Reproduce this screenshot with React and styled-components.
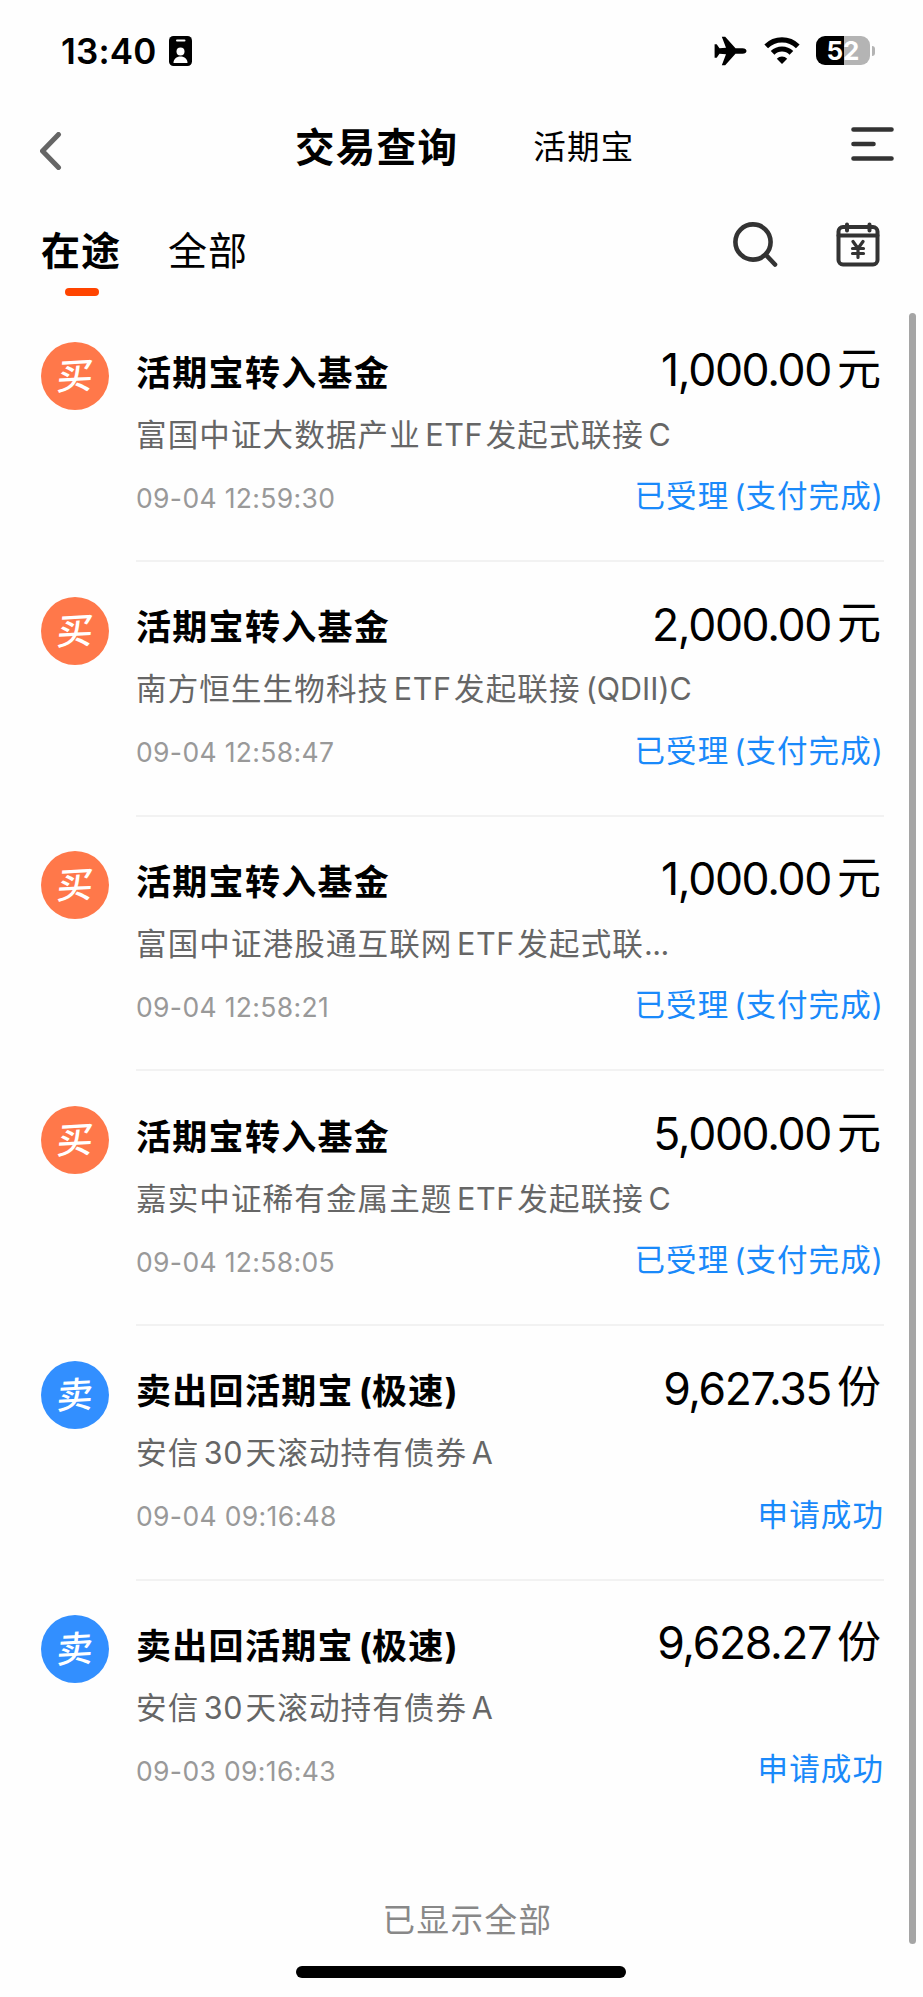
import React from 'react'
import styled, { createGlobalStyle } from 'styled-components'

const GlobalStyle = createGlobalStyle`
  * {
    box-sizing: border-box;
  }
  body {
    margin: 0;
    background: #fefefe;
    font-family: Inter, "Noto Sans CJK SC", sans-serif;
    color: #000;
  }
`
const Page = styled.div`
  width: 923px;
  height: 1997px;
  display: flex;
  flex-direction: column;
  overflow: hidden;
  white-space: nowrap;
`
const StatusBar = styled.div`
  height: 101px;
  padding: 0 48px 0 61px;
  display: flex;
  align-items: center;
  flex: none;
`
const Clock = styled.span`
  font-size: 35px;
  font-weight: 600;
  letter-spacing: 0.2px;
  margin-right: 12px;
`
const StatusIcons = styled.div`
  margin-left: auto;
  display: flex;
  align-items: center;
`
const Battery = styled.div`
  width: 54px;
  height: 29px;
  margin-left: 16px;
  border-radius: 9px;
  background: linear-gradient(90deg, #000 52%, #b4b4b4 52%);
  color: #fff;
  font-size: 26px;
  font-weight: 700;
  line-height: 29px;
  text-align: center;
`
const BatteryTip = styled.div`
  width: 3px;
  height: 10px;
  margin-left: 2px;
  border-radius: 0 4px 4px 0;
  background: #b4b4b4;
`
const NavBar = styled.div`
  height: 90px;
  margin-top: 1px;
  padding: 0 29px 0 40px;
  display: flex;
  align-items: center;
  flex: none;
`
const BackButton = styled.div`
  display: flex;
  padding-top: 7px;
`
const NavTitle = styled.h1`
  margin: 0 0 0 233px;
  padding-top: 2px;
  font-size: 39.5px;
  font-weight: 700;
  letter-spacing: 1.3px;
  line-height: 60px;
`
const NavLink = styled.span`
  margin-left: 75px;
  padding-top: 2px;
  font-size: 32.5px;
  letter-spacing: 1.3px;
  line-height: 60px;
`
const MenuButton = styled.div`
  margin-left: auto;
  padding-bottom: 6px;
  display: flex;
`
const TabBar = styled.div`
  height: 120px;
  padding: 24px 43px 0 41px;
  display: flex;
  align-items: flex-start;
  flex: none;
`
const Tab = styled.div`
  margin-right: 47px;
  display: flex;
  flex-direction: column;
  align-items: center;
  font-size: 39px;
  font-weight: ${p => (p.$active ? 700 : 400)};
  letter-spacing: 1px;
  line-height: 70px;
  &::after {
    content: '';
    width: 34px;
    height: 8px;
    border-radius: 4px;
    margin: 2px 0 0 2px;
    background: ${p => (p.$active ? '#ff4400' : 'transparent')};
  }
`
const Tools = styled.div`
  margin: 6px 0 0 auto;
  display: flex;
  gap: 58px;
`
const Body = styled.div`
  height: 1631px;
  display: flex;
  flex: none;
  margin-top: 1px;
`
const Content = styled.div`
  flex: 1;
  padding-left: 41px;
`
const Row = styled.div`
  height: 254.7px;
  display: flex;
  align-items: flex-start;
`
const Badge = styled.div`
  width: 68px;
  height: 68px;
  margin: 29px 27px 0 0;
  border-radius: 50%;
  flex: none;
  display: flex;
  align-items: center;
  justify-content: center;
  background: ${p => (p.$sell ? '#328fff' : '#ff784a')};
  color: #fff;
  font-size: 36px;
  font-weight: 500;
`
const BadgeText = styled.span`
  line-height: 40px;
  transform: rotate(-3deg) skewX(-8deg);
`
const Detail = styled.div`
  width: 748px;
  height: 249px;
  border-bottom: ${p => (p.$last ? 'none' : '2px solid #f2f2f2')};
`
const Line = styled.div`
  display: flex;
  justify-content: space-between;
  align-items: center;
  height: ${p => p.$height}px;
`
const Title = styled.div`
  font-size: 35px;
  font-weight: 700;
  letter-spacing: 1.3px;
`
const Amount = styled.div`
  display: flex;
  align-items: center;
  font-size: 44.5px;
  letter-spacing: -1.35px;
  margin-right: 3px;
`
const Unit = styled.span`
  font-size: 44px;
  margin-left: 6px;
  padding-bottom: 9px;
  letter-spacing: 0;
`
const Fund = styled.div`
  font-size: 30.5px;
  letter-spacing: 1.15px;
  color: #666;
`
const Latin = styled.span`
  margin-left: ${p => (p.$open ? 5 : 4.5)}px;
  margin-right: ${p => (p.$open ? 0 : 2.5)}px;
  letter-spacing: ${p => (p.$open ? 0 : 0.6)}px;
`
const Dots = styled.span`
  letter-spacing: -0.5px;
`
const Time = styled.div`
  padding-top: 7px;
  font-size: 26.5px;
  letter-spacing: 0.35px;
  color: #999;
`
const Status = styled.div`
  font-size: 30.5px;
  letter-spacing: 1.1px;
  color: #1989fa;
`
const Scrollbar = styled.div`
  width: 7px;
  height: 1631px;
  margin-right: 7px;
  border-radius: 4px;
  background: #a5a5a5;
`
const Footer = styled.div`
  margin-top: 55px;
  padding-right: 15px;
  text-align: center;
  font-size: 32.5px;
  letter-spacing: 1.5px;
  line-height: 50px;
  color: #888;
`
const HomeIndicator = styled.div`
  width: 330px;
  height: 12px;
  flex: none;
  margin: 22px auto 0 296px;
  border-radius: 6px;
  background: #000;
`

const orders = [
  { title: '活期宝转入基金', amount: '1,000.00', unit: '元', fund: '富国中证大数据产业ETF发起式联接C', time: '09-04 12:59:30', status: '已受理(支付完成)' },
  { title: '活期宝转入基金', amount: '2,000.00', unit: '元', fund: '南方恒生生物科技ETF发起联接(QDII)C', time: '09-04 12:58:47', status: '已受理(支付完成)' },
  { title: '活期宝转入基金', amount: '1,000.00', unit: '元', fund: '富国中证港股通互联网ETF发起式联...', time: '09-04 12:58:21', status: '已受理(支付完成)' },
  { title: '活期宝转入基金', amount: '5,000.00', unit: '元', fund: '嘉实中证稀有金属主题ETF发起联接C', time: '09-04 12:58:05', status: '已受理(支付完成)' },
  { sell: true, title: '卖出回活期宝(极速)', amount: '9,627.35', unit: '份', fund: '安信30天滚动持有债券A', time: '09-04 09:16:48', status: '申请成功' },
  { sell: true, title: '卖出回活期宝(极速)', amount: '9,628.27', unit: '份', fund: '安信30天滚动持有债券A', time: '09-03 09:16:43', status: '申请成功' }
]

// adds the narrow gap between Chinese and Latin runs
const Mixed = ({ text }) =>
  text.split(/([A-Z0-9]+|\([A-Z]+\)C|\(|\.{3})/).map((part, i) => {
    if (i % 2 === 0) return part
    if (part === '...') return <Dots key={i}>{part}</Dots>
    return <Latin key={i} $open={part[0] === '('}>{part}</Latin>
  })

const Order = ({ order, last }) => (
  <Row>
    <Badge $sell={order.sell}><BadgeText>{order.sell ? '卖' : '买'}</BadgeText></Badge>
    <Detail $last={last}>
      <Line $height={114}>
        <Title><Mixed text={order.title} /></Title>
        <Amount>{order.amount}<Unit>{order.unit}</Unit></Amount>
      </Line>
      <Line $height={11}>
        <Fund><Mixed text={order.fund} /></Fund>
      </Line>
      <Line $height={112}>
        <Time>{order.time}</Time>
        <Status><Mixed text={order.status} /></Status>
      </Line>
    </Detail>
  </Row>
)

const IdCard = () => (
  <svg width='23' height='30' viewBox='0 0 23 30'>
    <rect width='23' height='30' rx='4.5' />
    <rect x='7' y='3.5' width='9.5' height='2' rx='1' fill='#fff' />
    <circle cx='11.5' cy='15.5' r='4' fill='#fff' />
    <path d='M4.5 27c0-4 3-6.500 7-6.500s7 2.500 7 6.500z' fill='#fff' />
  </svg>
)

const Plane = () => (
  <svg width='33' height='30' viewBox='0 0 33 30'>
    <path d='M32.500 15c0 1.500-1.500 2.700-4 2.700h-7L11.200 29.300H7.800l4.200-11.100-6.500-.5-2.800 4H.6V8.300h2.100l2.800 4 6.500-.5L7.800.7h3.400L21.500 12.300h7c2.500 0 4 1.200 4 2.700z' />
  </svg>
)

const Wifi = () => (
  <svg width='36' height='27' viewBox='0 0 36 27' fill='none' stroke='#000' strokeWidth='5.200'>
    <path d='M2.200 9.300a22.500 22.500 0 0 1 31.600 0' />
    <path d='M8.600 15.900a13.300 13.300 0 0 1 18.800 0' />
    <path d='M18 27l-5.200-5.300a7.400 7.400 0 0 1 10.400 0z' fill='#000' stroke='none' />
  </svg>
)

const App = () => (
  <Page>
    <GlobalStyle />
    <StatusBar>
      <Clock>13:40</Clock>
      <IdCard />
      <StatusIcons>
        <Plane />
        <svg width='17' height='1' />
        <Wifi />
        <Battery>52</Battery>
        <BatteryTip />
      </StatusIcons>
    </StatusBar>
    <NavBar>
      <BackButton>
        <svg width='22' height='38' viewBox='0 0 22 38' fill='none' stroke='#666' strokeWidth='5' strokeLinecap='round' strokeLinejoin='round'>
          <path d='M18.500 2.500L2.500 19l16 16.500' />
        </svg>
      </BackButton>
      <NavTitle>交易查询</NavTitle>
      <NavLink>活期宝</NavLink>
      <MenuButton>
        <svg width='43' height='34' viewBox='0 0 43 34' stroke='#333' strokeWidth='4.600' strokeLinecap='round'>
          <path d='M2.500 2.500h38M2.500 17h20M2.500 31.500h38' />
        </svg>
      </MenuButton>
    </NavBar>
    <TabBar>
      <Tab $active>在途</Tab>
      <Tab>全部</Tab>
      <Tools>
        <svg width='45' height='46' viewBox='0 0 45 46' fill='none' stroke='#333' strokeWidth='4.600' strokeLinecap='round'>
          <circle cx='20' cy='20' r='17.600' />
          <path d='M33 33l9 9.500' />
        </svg>
        <svg width='44' height='45' viewBox='0 0 44 45' fill='none' stroke='#333' strokeWidth='4' strokeLinecap='round'>
          <rect x='2.500' y='5' width='39' height='37.500' rx='4.500' />
          <path d='M2.500 13.500h39M11 2.500v6M33.500 2.500v6' />
          <path d='M17 19.500l5 7 5-7M22 27v8.500M16.500 26.500h11M16.500 31.500h11' strokeWidth='3.200' />
        </svg>
      </Tools>
    </TabBar>
    <Body>
      <Content>
        {orders.map((order, i) => (
          <Order key={i} order={order} last={i === orders.length - 1} />
        ))}
        <Footer>已显示全部</Footer>
      </Content>
      <Scrollbar />
    </Body>
    <HomeIndicator />
  </Page>
)

export default App
